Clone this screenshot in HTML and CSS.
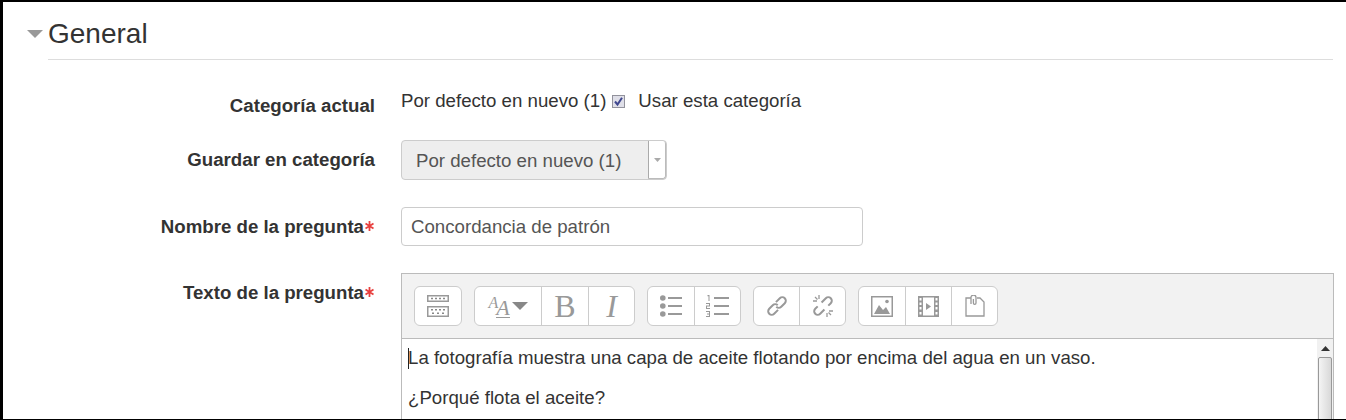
FILE: index.html
```html
<!DOCTYPE html>
<html lang="es">
  <head>
    <meta charset="UTF-8" />
    <title>Editar pregunta</title>
    <link rel="stylesheet" href="styles.css">
  </head>
  <body>
    <div class="frame">
      <div class="legend">
        <svg class="legend-arrow" width="16" height="8" viewBox="0 0 16 8"><path d="M0 0h16L8 8z" fill="#999" /></svg>
        <h2>General</h2>
      </div>
      <form class="fields">
        <div class="row row-current">
          <label class="field-label">Categoría actual</label>
          <div class="static">
            <span>Por defecto en nuevo (1)</span>
            <svg class="check" width="13" height="13" viewBox="0 0 13 13">
              <rect x="0.5" y="0.5" width="12" height="12" fill="#dfdfe8" stroke="#92929c" />
              <path d="M3 6.500l2.500 3L10 2.800" fill="none" stroke="#3f478f" stroke-width="2" />
            </svg>
            <span>Usar esta categoría</span>
          </div>
        </div>

        <div class="row row-select">
          <label class="field-label">Guardar en categoría</label>
          <div class="select">
            <span class="select-text">Por defecto en nuevo (1)</span>
            <span class="select-btn"><svg width="7" height="4" viewBox="0 0 7 4"><path d="M0 0h7L3.500 4z" fill="#aaa" /></svg></span>
          </div>
        </div>

        <div class="row row-name">
          <label class="field-label">Nombre de la pregunta<svg class="req" width="9" height="10" viewBox="0 0 9 10" stroke="#e8403f" stroke-width="1.800"><path d="M4.500 0v10M.5 2.500l8 5M8.500 2.500l-8 5" /></svg></label>
          <input class="text-input" type="text" value="Concordancia de patrón" />
        </div>

        <div class="row row-editor">
          <label class="field-label">Texto de la pregunta<svg class="req" width="9" height="10" viewBox="0 0 9 10" stroke="#e8403f" stroke-width="1.800"><path d="M4.500 0v10M.5 2.500l8 5M8.500 2.500l-8 5" /></svg></label>
          <div class="editor">
            <div class="toolbar">
              <div class="group">
                <button type="button" class="tool tool-collapse">
                  <svg width="26" height="24" viewBox="0 0 26 24">
                    <path d="M2 1h22v7H2z" fill="#999" />
                    <path d="M3.500 2.500h19v4h-19z" fill="#fff" />
                    <path d="M2 12h22v11H2z" fill="#999" />
                    <path d="M3.500 13.500h19v8h-19z" fill="#fff" />
                    <path d="M6 3.700h2v1.600H6zM10 3.700h2v1.600h-2zM14 3.700h2v1.600h-2zM18 3.700h2v1.600h-2zM6 15h2v1.600H6zM10 15h2v1.600h-2zM14 15h2v1.600h-2zM18 15h2v1.600h-2zM7 18.400h2V20H7zM12 18.400h2V20h-2zM17 18.400h2V20h-2z" fill="#888" />
                  </svg>
                </button>
              </div>
              <div class="group">
                <button type="button" class="tool tool-style">
                  <span class="aa"><span class="aa-small">A</span><span class="aa-big">A</span></span>
                  <svg width="16" height="8" viewBox="0 0 16 8"><path d="M0 0h16L8 8z" fill="#888" /></svg>
                </button>
                <button type="button" class="tool tool-b">B</button>
                <button type="button" class="tool tool-i">I</button>
              </div>
              <div class="group">
                <button type="button" class="tool tool-list">
                  <svg width="22" height="22" viewBox="0 0 22 22" fill="#999">
                    <circle cx="2.800" cy="3" r="2.800" /><circle cx="2.800" cy="11" r="2.800" /><circle cx="2.800" cy="19" r="2.800" />
                    <path d="M8 2h14v2H8zM8 10h14v2H8zM8 18h14v2H8z" />
                  </svg>
                </button>
                <button type="button" class="tool tool-olist">
                  <svg width="23" height="22" viewBox="0 0 23 22" fill="#999">
                    <path d="M1.500 0h2v6h-1V1.200h-1zM0 8h4v3.500H1v1.500h3v1H0v-3.500h3V9H0zM0 16h4v6H0v-1h3v-1.500H1v-1h2V17H0z" />
                    <path d="M8 2h15v2H8zM8 10h15v2H8zM8 18h15v2H8z" />
                  </svg>
                </button>
              </div>
              <div class="group">
                <button type="button" class="tool tool-link">
                  <svg width="22" height="22" viewBox="0 0 22 22" fill="none" stroke="#999" stroke-width="2">
                    <g transform="translate(11 11) rotate(-45)">
                      <path d="M2 -3.500H7.500a3.500 3.500 0 0 1 0 7H2.500a3.500 3.500 0 0 1 -3.500 -3.500" />
                      <path d="M-2 3.500H-7.500a3.500 3.500 0 0 1 0 -7H-2.500a3.500 3.500 0 0 1 3.500 3.500" />
                    </g>
                  </svg>
                </button>
                <button type="button" class="tool tool-unlink">
                  <svg width="22" height="22" viewBox="0 0 22 22" fill="none" stroke="#999" stroke-width="2">
                    <g transform="translate(11 11) rotate(-45)">
                      <path d="M1.500 -3.500H7.500a3.500 3.500 0 0 1 0 7H4" />
                      <path d="M-1.500 3.500H-7.500a3.500 3.500 0 0 1 0 -7H-4" />
                    </g>
                    <path stroke-width="1.300" d="M7 0v4M1 6h4M3 2l2.500 2.500M15 22v-4M21 16h-4M19 20l-2.500-2.500" />
                  </svg>
                </button>
              </div>
              <div class="group">
                <button type="button" class="tool tool-image">
                  <svg width="22" height="21" viewBox="0 0 22 21">
                    <path d="M.75.75h20.500v19.500H.75z" fill="#fff" stroke="#999" stroke-width="1.500" />
                    <path d="M3 18l5-9 4 5 3-3 4 7z" fill="#999" />
                    <circle cx="16" cy="5.500" r="1.800" fill="#999" />
                  </svg>
                </button>
                <button type="button" class="tool tool-video">
                  <svg width="21" height="21" viewBox="0 0 21 21">
                    <path d="M0 0h21v21H0z" fill="#999" />
                    <path d="M5 1.500h11v18H5z" fill="#fff" />
                    <path d="M1.500 2h2v2.500h-2zM1.500 6.500h2V9h-2zM1.500 11h2v2.500h-2zM1.500 16h2v2.500h-2zM17.500 2h2v2.500h-2zM17.500 6.500h2V9h-2zM17.500 11h2v2.500h-2zM17.500 16h2v2.500h-2z" fill="#fff" />
                    <path d="M8 7l5 3.500L8 14z" fill="#999" />
                  </svg>
                </button>
                <button type="button" class="tool tool-file">
                  <svg width="20" height="22" viewBox="0 0 20 22" fill="none" stroke="#999" stroke-width="1.300">
                    <path d="M6 3H1v18h18V7l-4-4h-3" />
                    <path d="M6 9V2.500a2.500 2.500 0 0 1 5 0V8a1.300 1.300 0 0 1-2.600 0V4" />
                  </svg>
                </button>
              </div>
            </div>
            <div class="editor-body">
              <div class="content">
                <p><span class="caret"></span>La fotografía muestra una capa de aceite flotando por encima del agua en un vaso.</p>
                <p>¿Porqué flota el aceite?</p>
              </div>
              <div class="scrollbar">
                <div class="scroll-up"><svg width="9" height="5" viewBox="0 0 9 5"><path d="M0 5h9L4.500 0z" fill="#333" /></svg></div>
                <div class="scroll-thumb"></div>
              </div>
            </div>
          </div>
        </div>
      </form>
    </div>
  </body>
</html>
```

FILE: styles.css
```css
html,
body {
  margin: 0;
  height: 420px;
  overflow: hidden;
  background-color: #fff;
}
body {
  font-family: "Liberation Sans", Arial, sans-serif;
  font-size: 18.66px;
  line-height: 24px;
  color: #333;
}
.frame {
  box-sizing: border-box;
  height: 420px;
  overflow: hidden;
  border-top: 2px solid #000;
  border-bottom: 1px solid #000;
  border-left: 3px solid #000;
  padding: 0 13px 0 24px;
}
.legend {
  display: flex;
  align-items: center;
  height: 57px;
  padding-top: 7px;
  box-sizing: border-box;
}
.legend-arrow {
  flex: none;
  margin-right: 5px;
}
.legend h2 {
  margin: 0;
  font-size: 28px;
  font-weight: normal;
  line-height: 50px;
}
.fields {
  border-top: 1px solid #ddd;
  margin-left: 21px;
}
.row {
  display: flex;
  align-items: flex-start;
}
.field-label {
  flex: none;
  width: 327px;
  margin-right: 26px;
  text-align: right;
  font-weight: bold;
  color: #333;
}
.req {
  margin: 0 1px;
  vertical-align: 2px;
}
.row-current {
  margin-top: 29px;
}
.row-current .field-label {
  padding-top: 5px;
}
.static {
  display: flex;
  align-items: center;
  white-space: nowrap;
  color: #333;
}
.check {
  margin: 0 13px 0 6px;
}
.row-select {
  margin-top: 22px;
}
.row-select .field-label {
  padding-top: 8px;
}
.select {
  box-sizing: border-box;
  display: flex;
  width: 266px;
  height: 40px;
  background-color: #eee;
  border: 1px solid #ccc;
  border-radius: 4px;
  color: #555;
}
.select-text {
  flex: 1;
  padding-left: 14px;
  line-height: 40px;
}
.select-btn {
  box-sizing: border-box;
  width: 18px;
  display: flex;
  align-items: center;
  justify-content: center;
  background-color: #fff;
  border-left: 1px solid #aaa;
  border-right: 1px solid #bbb;
  border-bottom: 1px solid #bbb;
  border-radius: 0 3px 3px 0;
}
.row-name {
  margin-top: 27px;
}
.row-name .field-label {
  padding-top: 8px;
}
.text-input {
  box-sizing: border-box;
  width: 462px;
  height: 39px;
  padding: 0 9px;
  border: 1px solid #ccc;
  border-radius: 4px;
  font: inherit;
  color: #555;
  background-color: #fff;
}
.row-editor {
  margin-top: 27px;
}
.row-editor .field-label {
  padding-top: 8px;
}
.editor {
  box-sizing: border-box;
  width: 933px;
  flex: none;
  border: 1px solid #bbb;
  border-bottom: 0;
}
.toolbar {
  display: flex;
  gap: 12px;
  height: 65px;
  box-sizing: border-box;
  padding: 12px 12px 0;
  background-color: #f2f2f2;
  border-bottom: 1px solid #bbb;
}
.group {
  display: flex;
  height: 40px;
  box-sizing: border-box;
  background-color: #fff;
  border: 1px solid #ccc;
  border-radius: 6px;
}
.tool {
  display: flex;
  align-items: center;
  justify-content: center;
  height: 100%;
  padding: 0;
  border: 0;
  border-left: 1px solid #ccc;
  background: none;
  color: #999;
}
.tool:first-child {
  border-left: 0;
}
.tool-collapse,
.tool-i,
.tool-list,
.tool-olist,
.tool-unlink,
.tool-image,
.tool-video,
.tool-file {
  width: 46px;
}
.tool-link {
  width: 45px;
}
.tool-style {
  width: 66px;
  gap: 2px;
}
.tool-b {
  width: 47px;
  font: 32px "Liberation Serif", serif;
}
.tool-i {
  font: italic 32px "Liberation Serif", serif;
}
.aa {
  display: flex;
  align-items: flex-start;
  font: italic 20px/1 "Liberation Serif", serif;
  color: #999;
}
.aa-small {
  font-size: 16px;
}
.aa-big {
  font-size: 22px;
  margin-top: 3px;
  margin-left: -2px;
  border-bottom: 1px solid #999;
  line-height: 19px;
}
.editor-body {
  display: flex;
  height: 100px;
}
.content {
  flex: 1;
  padding: 7px 0 0 6px;
}
.content p {
  margin: 0 0 16px;
}
.caret {
  display: inline-block;
  width: 1px;
  height: 21px;
  margin-right: -1px;
  vertical-align: -5px;
  background-color: #222;
}
.scrollbar {
  width: 16px;
  background-color: #f1f1f1;
}
.scroll-up {
  height: 18px;
  display: flex;
  align-items: center;
  justify-content: center;
}
.scroll-thumb {
  box-sizing: border-box;
  height: 80px;
  margin: 0 1px;
  border: 1px solid #999;
  border-radius: 2px;
  background: linear-gradient(to right, #f4f4f4, #d8d8d8);
}
```
